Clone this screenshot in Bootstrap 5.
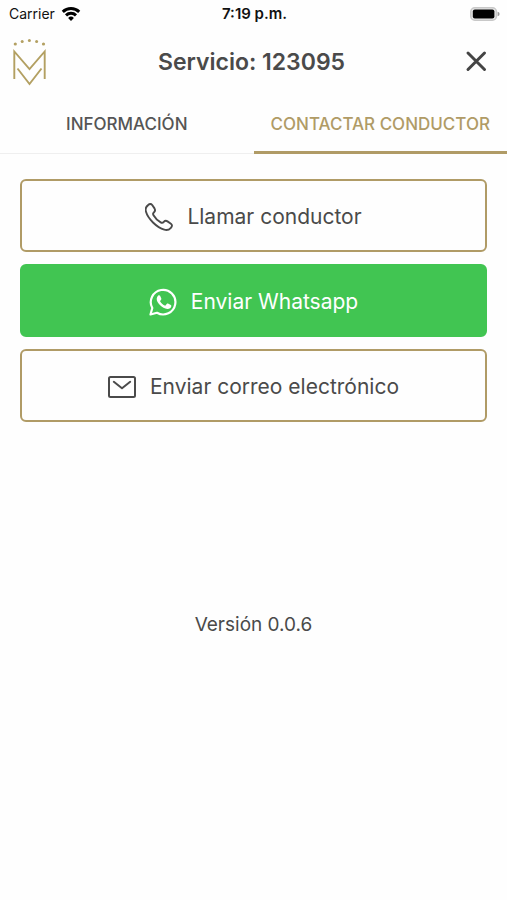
<!DOCTYPE html>
<html lang="es">
<head>
<meta charset="utf-8">
<meta name="viewport" content="width=device-width, initial-scale=1">
<title>Servicio: 123095</title>
<link href="https://cdn.jsdelivr.net/npm/bootstrap@5.3.0/dist/css/bootstrap.min.css" rel="stylesheet">
<style>
  :root { --gold: #b09b66; --ink: #4a4a4a; --green: #41c552; }
  body { font-family: Inter, "Liberation Sans", sans-serif; color: var(--ink); background: #fefefe; }
  svg { display: block; flex: none; }
  .status-bar { height: 28px; padding: 0 7px 0 9px; font-size: 14px; line-height: 20px; color: #111; }
  .carrier { gap: 6px; }
  .status-time { font-size: 15px; font-weight: 600; }
  .app-header { height: 66px; padding: 2px 12px 0 8px; }
  .app-title { font-size: 23px; line-height: 32px; font-weight: 600; }
  .side { flex: 1 1 0; }
  .close-btn { color: #444; line-height: 0; }
  .service-tabs { height: 60px; border-bottom: 1px solid #efefef; }
  .service-tabs .nav-link { height: 60px; padding: 2px 0 0; font-size: 17px; line-height: 24px; font-weight: 500; color: #555; border-bottom: 3px solid transparent; border-radius: 0; white-space: nowrap; }
  .service-tabs .nav-link.active { color: var(--gold); border-color: var(--gold); }
  .actions { padding: 25px 20px 0; gap: 12px; }
  .action-btn { height: 73px; padding-top: 8px; gap: 14px; font-size: 21px; line-height: 32px; color: var(--ink); border: 2px solid var(--gold); border-radius: 6px; }
  .action-btn.whatsapp { color: #fff; background: var(--green); border-color: var(--green); }
  .version { margin-top: 189px; font-size: 19px; line-height: 28px; }
</style>
</head>
<body>
<div class="status-bar d-flex align-items-center">
  <div class="carrier side d-flex align-items-center">
    <span>Carrier</span>
    <svg width="20" height="15" viewBox="0 0 20 15" fill="none" stroke="#000" stroke-width="3" aria-hidden="true">
      <path d="M1.800 4.900a11.800 11.800 0 0 1 16.400 0M5 8.300a7.200 7.200 0 0 1 10 0"/>
      <path d="M10 14 7.100 11a4.100 4.100 0 0 1 5.800 0z" fill="#000" stroke="none"/>
    </svg>
  </div>
  <span class="status-time">7:19 p.m.</span>
  <div class="side d-flex justify-content-end">
    <svg width="30" height="14" viewBox="0 0 30 14" aria-hidden="true">
      <rect x=".8" y=".8" width="25.600" height="12.400" rx="4" fill="#e8e8e8" stroke="#c8c8c8" stroke-width="1.600"/>
      <rect x="2.800" y="2.600" width="21.600" height="8.800" rx="2" fill="#000"/>
      <path d="M27.600 4.700v4.600q2-.6 2-2.300t-2-2.300z" fill="#999"/>
    </svg>
  </div>
</div>
<header class="app-header d-flex align-items-center">
  <div class="side">
    <svg width="44" height="52" viewBox="0 0 44 52" role="img" aria-label="Logo" fill="none" stroke="#b3a062" stroke-width="1.900">
      <path d="M6.300 43V15.500L21.500 33 36.700 15.500V43M9.500 32.500l12 15.500 12-15.500"/>
      <g fill="#b3a062" stroke="none"><circle cx="7.300" cy="8" r="1.600"/><circle cx="14.200" cy="5.500" r="1.500"/><circle cx="21.400" cy="4.600" r="1.500"/><circle cx="28.600" cy="5.500" r="1.500"/><circle cx="35.500" cy="8" r="1.600"/></g>
    </svg>
  </div>
  <h1 class="app-title m-0">Servicio: 123095</h1>
  <div class="side d-flex justify-content-end">
    <button type="button" class="close-btn btn border-0 p-0 me-1" aria-label="Cerrar">
      <svg width="28" height="28" viewBox="0 0 28 28" fill="none" stroke="currentColor" stroke-width="3" stroke-linecap="round"><path d="M5 5 21.500 21.500M21.500 5 5 21.500"/></svg>
    </button>
  </div>
</header>
<nav class="service-tabs nav nav-fill flex-nowrap">
  <a class="nav-link w-50 d-flex align-items-center justify-content-center" href="#informacion">INFORMACIÓN</a>
  <a class="nav-link active w-50 d-flex align-items-center justify-content-center" href="#contactar" aria-current="page">CONTACTAR CONDUCTOR</a>
</nav>
<main id="contactar">
  <div class="actions d-flex flex-column">
    <button type="button" class="action-btn btn d-flex align-items-center justify-content-center">
      <svg width="28" height="28" viewBox="0 0 28 28" fill="none" stroke="currentColor" stroke-width="1.900" stroke-linejoin="round" aria-hidden="true">
        <path d="M3.100 2.100C4.500.7 6.100.6 7.200 2l2.300 3.400c.9 1.500.7 2.700-.5 3.800-1.200 1-1.300 1.700-.5 3 1.700 2.900 4.200 5.400 7.200 7.200 1.300.8 2.100.7 3.100-.5 1.100-1.200 2.300-1.400 3.700-.5l3.400 2.300c1.500 1.100 1.400 2.600 0 4.100-1.700 1.900-4 2.700-6.600 1.900-3.700-1.100-7.600-3.600-11.300-7.200-3.700-3.700-6.100-7.500-7.100-11-.8-2.700-.1-4.800 2.200-6.400z"/>
      </svg>
      <span>Llamar conductor</span>
    </button>
    <button type="button" class="action-btn whatsapp btn d-flex align-items-center justify-content-center">
      <svg width="28" height="28" viewBox="0 0 28 28" aria-hidden="true">
        <path d="M1.500 26.500 3.300 20A12.300 12.300 0 1 1 8 24.800z" fill="none" stroke="currentColor" stroke-width="2.200" stroke-linejoin="round"/>
        <path d="M9.200 7.500c.6-.5 1.500-.5 1.900.3l1.200 2.800c.2.600-.1 1.200-1 2.100-.3.300-.3.600-.1.900 1.100 1.800 2.500 3 4.400 3.900.5.200.8.200 1.100-.2l1.200-1.500c.3-.4.700-.4 1.100-.2l2.800 1.400c.5.300.6.600.5 1.200-.3 1.800-2 2.900-3.900 2.800-2.600-.2-5.400-1.700-7.500-4-1.900-2-3.300-4.100-3.200-6.300.1-1.300.6-2.400 1.500-3.200z" fill="currentColor"/>
      </svg>
      <span>Enviar Whatsapp</span>
    </button>
    <button type="button" class="action-btn btn d-flex align-items-center justify-content-center">
      <svg width="28" height="22" viewBox="0 0 28 22" fill="none" stroke="currentColor" stroke-width="2" stroke-linejoin="round" stroke-linecap="round" aria-hidden="true">
        <rect x="1" y="1" width="26" height="20" rx="1.500"/><path d="m5.800 5.800 8.200 6.400 8.200-6.400"/>
      </svg>
      <span>Enviar correo electrónico</span>
    </button>
  </div>
  <p class="version text-center mb-0">Versión 0.0.6</p>
</main>
<script src="https://cdn.jsdelivr.net/npm/bootstrap@5.3.0/dist/js/bootstrap.bundle.min.js"></script>
</body>
</html>
